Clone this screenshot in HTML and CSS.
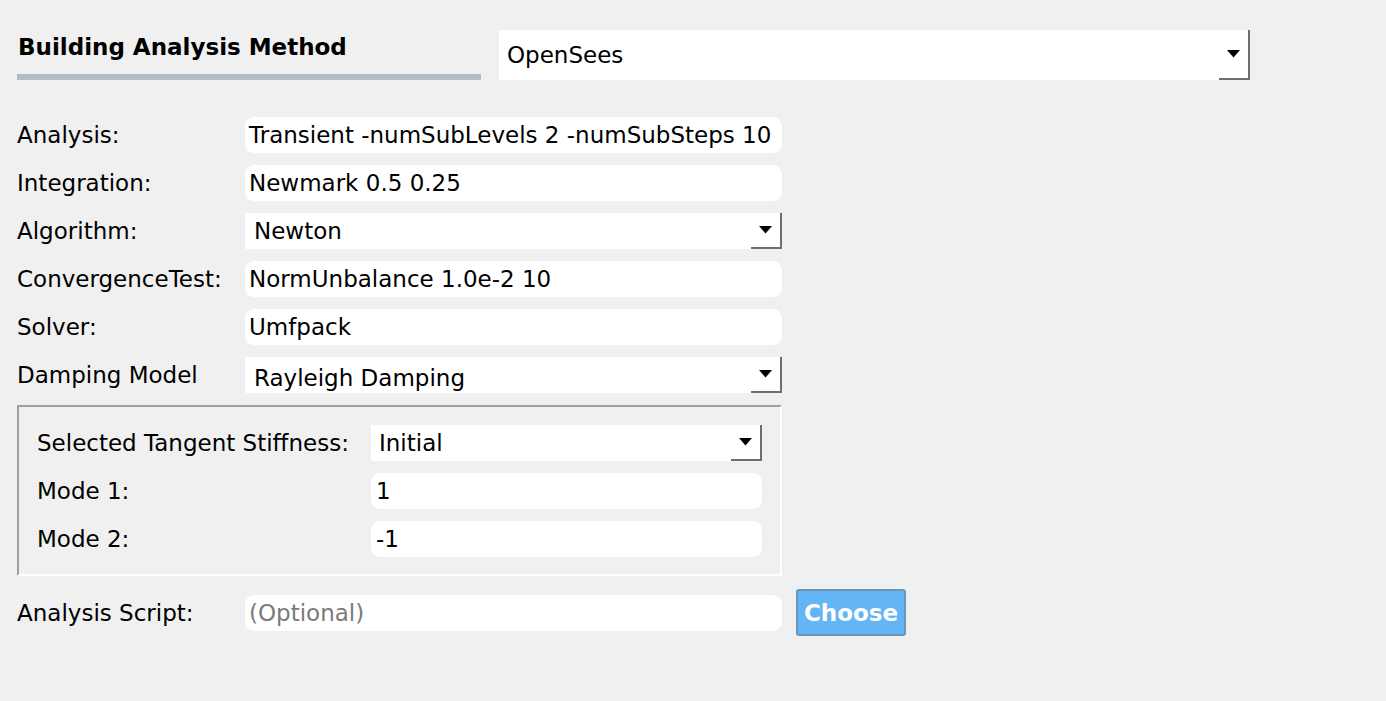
FILE: index.html
```html
<!DOCTYPE html>
<html>
<head>
<meta charset="utf-8">
<link rel="stylesheet" href="styles.css">
</head>
<body>
<div class="page">
  <div class="header">
    <div class="title-block">
      <div class="title">Building Analysis Method</div>
      <div class="bar"></div>
    </div>
    <div class="combo combo-big">
      <span class="combo-text">OpenSees</span>
      <span class="arrow"><svg width="13" height="8" viewBox="0 0 13 8"><polygon points="0,0 13,0 6.5,7.5" fill="#000"/></svg></span>
    </div>
  </div>

  <div class="form">
    <div class="label">Analysis:</div>
    <div class="input">Transient -numSubLevels 2 -numSubSteps 10</div>

    <div class="label">Integration:</div>
    <div class="input">Newmark 0.5 0.25</div>

    <div class="label">Algorithm:</div>
    <div class="combo">
      <span class="combo-text">Newton</span>
      <span class="arrow"><svg width="13" height="8" viewBox="0 0 13 8"><polygon points="0,0 13,0 6.5,7.5" fill="#000"/></svg></span>
    </div>

    <div class="label">ConvergenceTest:</div>
    <div class="input">NormUnbalance 1.0e-2 10</div>

    <div class="label">Solver:</div>
    <div class="input">Umfpack</div>

    <div class="label">Damping Model</div>
    <div class="combo">
      <span class="combo-text clip">Rayleigh Damping</span>
      <span class="arrow"><svg width="13" height="8" viewBox="0 0 13 8"><polygon points="0,0 13,0 6.5,7.5" fill="#000"/></svg></span>
    </div>
  </div>

  <div class="group">
    <div class="group-form">
      <div class="label">Selected Tangent Stiffness:</div>
      <div class="combo">
        <span class="combo-text">Initial</span>
        <span class="arrow"><svg width="13" height="8" viewBox="0 0 13 8"><polygon points="0,0 13,0 6.5,7.5" fill="#000"/></svg></span>
      </div>

      <div class="label">Mode 1:</div>
      <div class="input">1</div>

      <div class="label">Mode 2:</div>
      <div class="input">-1</div>
    </div>
  </div>

  <div class="script-row">
    <div class="label script-label">Analysis Script:</div>
    <div class="input placeholder">(Optional)</div>
    <button class="choose">Choose</button>
  </div>
</div>
</body>
</html>
```

FILE: styles.css
```css
html, body {
  margin: 0;
  padding: 0;
  background: #f0f0f0;
}
body {
  font-family: "DejaVu Sans", sans-serif;
  font-size: 23px;
  color: #000;
}
.page {
  padding: 30px 0 0 17px;
}
.header {
  display: flex;
  align-items: flex-start;
  gap: 18px;
}
.title-block {
  width: 464px;
  padding-top: 3px;
}
.title {
  font-weight: bold;
  font-size: 23px;
  line-height: 28px;
  padding-left: 1px;
  white-space: nowrap;
}
.bar {
  margin-top: 13px;
  height: 6px;
  background: #b2bec5;
}
.combo {
  position: relative;
  background: #fff;
  height: 36px;
  display: flex;
  align-items: center;
  padding-left: 9px;
  box-sizing: border-box;
  overflow: hidden;
}
.combo-big {
  width: 751px;
  height: 50px;
  padding-left: 8px;
}
.combo-text {
  line-height: 36px;
  white-space: nowrap;
}
.combo-text.clip {
  position: relative;
  top: 3px;
}
.arrow {
  position: absolute;
  right: 0;
  bottom: 0;
  width: 31px;
  height: 100%;
  box-sizing: border-box;
  border-right: 2px solid #6e6e6e;
  border-bottom: 2px solid #6e6e6e;
  display: flex;
  align-items: center;
  justify-content: center;
}
.arrow svg {
  display: block;
  margin-left: -1px;
}
.form {
  margin-top: 37px;
  display: grid;
  grid-template-columns: 228px 537px;
  grid-auto-rows: 36px;
  row-gap: 12px;
}
.label {
  display: flex;
  align-items: center;
  white-space: nowrap;
}
.input {
  background: #fff;
  border-radius: 9px;
  display: flex;
  align-items: center;
  padding-left: 4px;
  white-space: nowrap;
}
.placeholder {
  color: #7a7a7a;
}
.group {
  margin-top: 12px;
  width: 765px;
  box-sizing: border-box;
  border-top: 2px solid #a0a0a0;
  border-left: 2px solid #a0a0a0;
  border-right: 2px solid #ffffff;
  border-bottom: 2px solid #ffffff;
  padding: 18px 18px 17px 18px;
}
.group-form {
  display: grid;
  grid-template-columns: 334px 391px;
  grid-auto-rows: 36px;
  row-gap: 12px;
}
.group-form .combo {
  padding-left: 8px;
}
.group-form .input {
  padding-left: 5px;
}
.script-row {
  margin-top: 13px;
  display: grid;
  grid-template-columns: 228px 537px 110px;
  column-gap: 0;
  align-items: center;
}
.script-row .input {
  height: 36px;
  margin-top: 1px;
}
.script-row .label {
  height: 47px;
}
.choose {
  margin-left: 14px;
  width: 110px;
  height: 47px;
  background: #64b5f6;
  border: 2px solid #6796b8;
  border-radius: 3px;
  color: #fff;
  font-family: "DejaVu Sans", sans-serif;
  font-weight: bold;
  font-size: 23px;
  padding: 0;
}
```
